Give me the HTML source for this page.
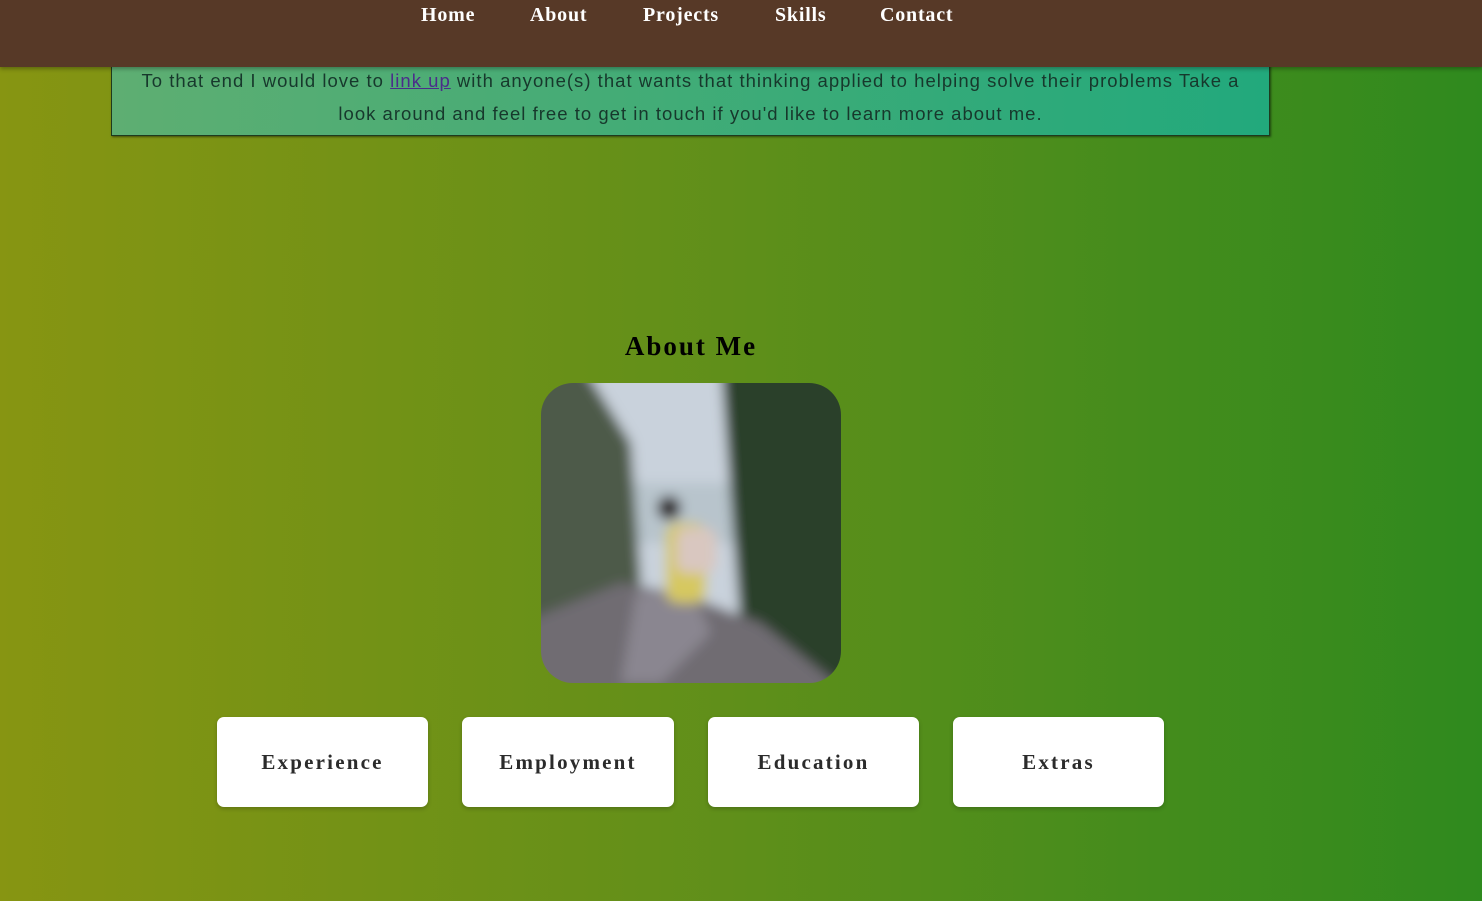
<!DOCTYPE html>
<html><head><meta charset="utf-8"><style>
html,body{margin:0;padding:0;width:1482px;height:901px;overflow:hidden}
body{background:linear-gradient(90deg,#879512 0%,#5f8f1a 50%,#2f8a1e 100%);font-family:"Liberation Sans",sans-serif;position:relative}
.nav{position:absolute;left:0;top:0;width:1482px;height:67px;background:#573927;box-shadow:0 2px 4px rgba(0,0,0,.3);z-index:2}
.nav a{position:absolute;top:4px;color:#fff;font-family:"Liberation Serif",serif;font-weight:bold;font-size:20px;text-decoration:none;letter-spacing:0.8px}
.box{position:absolute;left:111px;top:40px;width:1157px;height:94px;border:1px solid #1e3a1e;background:linear-gradient(90deg,#5eae72,#22a97c);box-shadow:1px 1px 2px rgba(0,0,0,.5)}
.box p{margin:0;position:absolute;left:-20px;right:-20px;top:23px;text-align:center;font-size:18.5px;line-height:33px;color:#17382c;letter-spacing:1.02px}
.box a{color:#4b2d8a}
h2{position:absolute;left:0;width:1382px;top:331px;margin:0;text-align:center;font-family:"Liberation Serif",serif;font-size:27px;font-weight:bold;color:#000;letter-spacing:2px}
.photo{position:absolute;left:541px;top:383px;width:300px;height:300px;border-radius:32px;overflow:hidden}
.btn{position:absolute;top:717px;width:211px;height:90px;background:#fff;border-radius:7px;box-shadow:0 2px 4px rgba(0,0,0,.2);text-align:center;line-height:90px;font-family:"Liberation Serif",serif;font-weight:bold;font-size:21px;color:#2b2b2b;letter-spacing:2.2px}
</style></head><body>
<div class="nav">
<a style="left:421px">Home</a><a style="left:530px">About</a><a style="left:643px">Projects</a><a style="left:775px">Skills</a><a style="left:880px">Contact</a>
</div>
<div class="box"><p>To that end I would love to <a href="#">link up</a> with anyone(s) that wants that thinking applied to helping solve their problems Take a<br>look around and feel free to get in touch if you'd like to learn more about me.</p></div>
<h2>About Me</h2>
<div class="photo">
<svg width="300" height="300" viewBox="0 0 300 300">
<defs><filter id="b"><feGaussianBlur stdDeviation="6"/></filter></defs>
<g filter="url(#b)">
<rect x="-20" y="-20" width="340" height="340" fill="#c9d2dc"/>
<rect y="100" width="300" height="60" fill="#b8c4cc"/>
<path d="M-20 -20 L40 -20 L90 60 L100 200 L-20 320Z" fill="#4d5a48"/>
<path d="M180 -20 L320 -20 L320 320 L200 250 L190 120Z" fill="#2b3f2a"/>
<path d="M-20 240 L80 200 L140 210 L220 240 L320 320 L-20 320Z" fill="#6f6c72"/>
<path d="M95 210 L150 205 L170 250 L120 300 L80 300Z" fill="#8a8690"/>
<rect x="125" y="140" width="40" height="80" rx="12" fill="#d6c860"/>
<rect x="135" y="145" width="40" height="45" rx="10" fill="#d9c7c0"/>
<circle cx="128" cy="125" r="12" fill="#2a2420"/>
</g>
</svg>
</div>
<div class="btn" style="left:217px">Experience</div>
<div class="btn" style="left:462px;width:212px">Employment</div>
<div class="btn" style="left:708px">Education</div>
<div class="btn" style="left:953px">Extras</div>
</body></html>
